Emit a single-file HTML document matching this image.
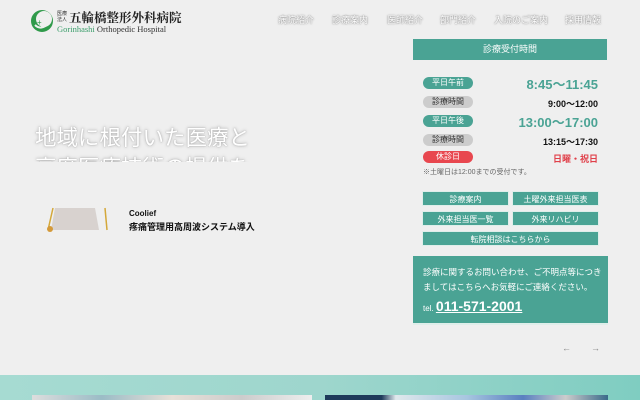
<!DOCTYPE html>
<html><head><meta charset="utf-8"><style>
*{margin:0;padding:0;box-sizing:border-box}
body{width:640px;height:400px;overflow:hidden;background:#efefef;font-family:"Liberation Sans","Noto Sans CJK JP",sans-serif;position:relative}
.a{position:absolute}
.nav{top:13px;font-size:9px;color:#fff;text-shadow:0 0 2px #999,0 0 1px #777;white-space:nowrap}
.hd{left:35px;font-size:21.5px;color:#fff;text-shadow:0 0 3px #aaa,0 0 1px #999;white-space:nowrap}
.pill{left:423px;width:50px;height:12px;border-radius:6px;font-size:8px;color:#fff;text-align:center;line-height:12px}
.t{right:42px;font-weight:bold;white-space:nowrap}
.btn{background:#4aa394;color:#fff;font-size:8px;text-align:center;line-height:15px;height:15px;border:1px solid #dfeeea}
</style></head><body>
<svg class="a" style="left:30px;top:9px" width="26" height="24" viewBox="0 0 26 24"><circle cx="12" cy="12" r="11" fill="#2f9a4a"/><circle cx="14" cy="10" r="8" fill="#efefef"/><path d="M5 16 q6 6 14 -2" stroke="#efefef" stroke-width="2" fill="none"/><text x="7" y="16" font-size="8" fill="#2f9a4a">+</text></svg>
<div class="a" style="left:57px;top:11px;font-size:5px;line-height:6px;color:#333">医療<br>法人</div>
<div class="a" style="left:69px;top:8px;font-size:12.5px;font-family:'Liberation Serif','Noto Serif CJK SC',serif;color:#222;font-weight:bold;white-space:nowrap">五輪橋整形外科病院</div>
<div class="a" style="left:57px;top:24px;font-size:8.5px;font-family:'Liberation Serif',serif;color:#333;white-space:nowrap"><span style="color:#3a9d6a">Gorinhashi</span> Orthopedic Hospital</div>
<div class="a nav" style="left:278px">病院紹介</div>
<div class="a nav" style="left:332px">診療案内</div>
<div class="a nav" style="left:387px">医師紹介</div>
<div class="a nav" style="left:440px">部門紹介</div>
<div class="a nav" style="left:494px">入院のご案内</div>
<div class="a nav" style="left:565px">採用情報</div>
<div class="a hd" style="top:121px">地域に根付いた医療と</div>
<div class="a" style="left:30px;top:151px;width:240px;height:11px;overflow:hidden"><div class="hd" style="position:absolute;left:5px;top:0">高度医療技術の提供を</div></div>
<svg class="a" style="left:45px;top:206px" width="65" height="26"><path d="M10 2 L50 2 L54 24 L6 24 Z" fill="#d8d2cf"/><path d="M8 2 L3 24 M60 2 L62 24" stroke="#d4a83a" stroke-width="1.5"/><circle cx="5" cy="23" r="3" fill="#d49a3a"/></svg>
<div class="a" style="left:129px;top:209px;font-size:8px;color:#111;font-weight:bold">Coolief</div>
<div class="a" style="left:129px;top:220px;font-size:9px;color:#111;font-weight:bold;white-space:nowrap">疼痛管理用高周波システム導入</div>
<div class="a" style="left:413px;top:39px;width:194px;height:21px;background:#4aa394;color:#fff;font-size:9px;text-align:center;line-height:21px">診療受付時間</div>
<div class="a pill" style="top:77px;background:#4aa394">平日午前</div>
<div class="a t" style="top:74px;font-size:13px;color:#4aa394">8:45〜11:45</div>
<div class="a pill" style="top:96px;background:#ccc;color:#333">診療時間</div>
<div class="a t" style="top:97px;font-size:9px;color:#111">9:00〜12:00</div>
<div class="a pill" style="top:115px;background:#4aa394">平日午後</div>
<div class="a t" style="top:112px;font-size:13px;color:#4aa394">13:00〜17:00</div>
<div class="a pill" style="top:134px;background:#ccc;color:#333">診療時間</div>
<div class="a t" style="top:135px;font-size:9px;color:#111">13:15〜17:30</div>
<div class="a pill" style="top:151px;background:#e8474f">休診日</div>
<div class="a t" style="top:152px;font-size:9px;color:#e0404a">日曜・祝日</div>
<div class="a" style="left:423px;top:167px;font-size:7px;color:#666">※土曜日は12:00までの受付です。</div>
<div class="a btn" style="left:422px;top:191px;width:87px">診療案内</div>
<div class="a btn" style="left:512px;top:191px;width:87px">土曜外来担当医表</div>
<div class="a btn" style="left:422px;top:211px;width:87px">外来担当医一覧</div>
<div class="a btn" style="left:512px;top:211px;width:87px">外来リハビリ</div>
<div class="a btn" style="left:422px;top:231px;width:177px">転院相談はこちらから</div>
<div class="a" style="left:413px;top:256px;width:195px;height:69px;background:#4aa394;color:#fff;border-bottom:2px solid #dfeeea">
<div style="position:absolute;left:10px;top:9px;font-size:8.5px;line-height:15px">診療に関するお問い合わせ、ご不明点等につき<br>ましてはこちらへお気軽にご連絡ください。</div>
<div style="position:absolute;left:10px;top:42px;font-size:8px;white-space:nowrap">tel. <span style="font-size:14px;font-weight:bold;text-decoration:underline">011-571-2001</span></div>
</div>
<div class="a" style="left:562px;top:343px;font-size:9px;color:#888">←</div>
<div class="a" style="left:591px;top:343px;font-size:9px;color:#888">→</div>
<div class="a" style="left:0;top:375px;width:640px;height:25px;background:linear-gradient(90deg,#a6dbd2,#9ed6cd 50%,#7fcdc1)"></div>
<div class="a" style="left:32px;top:395px;width:280px;height:5px;background:linear-gradient(90deg,#ddd,#9bbcc6,#e8e0d8,#ccc,#eee)"></div>
<div class="a" style="left:325px;top:395px;width:283px;height:5px;background:linear-gradient(90deg,#1e3a5a,#1e3a5a 20%,#dfe8ec 25%,#a8c6e0 50%,#5a7fc0 70%,#ccc 85%,#3a6a8a)"></div>
</body></html>
